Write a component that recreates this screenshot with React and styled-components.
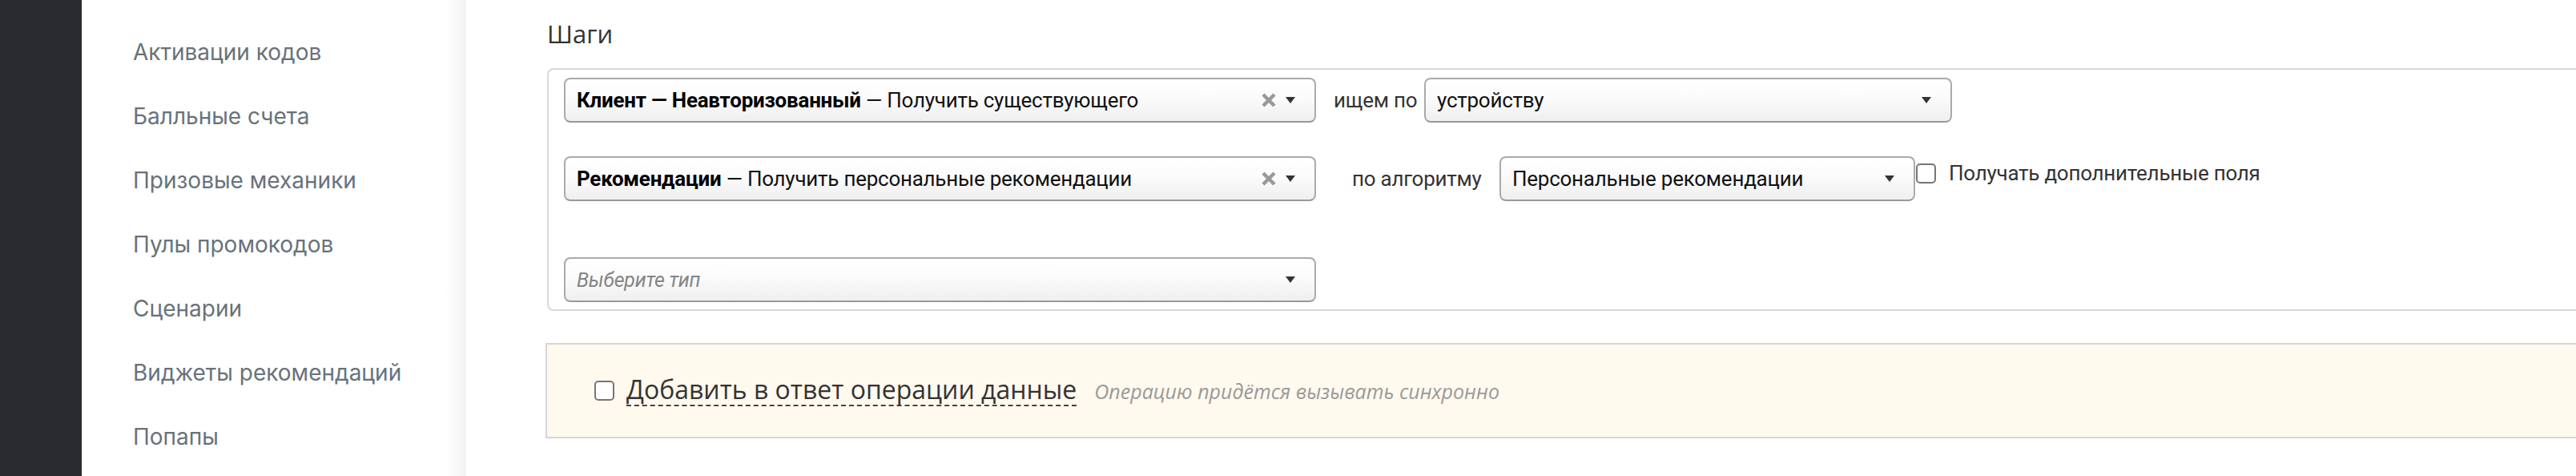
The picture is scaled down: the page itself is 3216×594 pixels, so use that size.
import React from 'react';
import styled, { createGlobalStyle } from 'styled-components';

const GlobalStyle = createGlobalStyle`
  html, body { margin: 0; padding: 0; background: #fff; }
  body { overflow: hidden; font-family: "Open Sans", "Noto Sans", sans-serif; }
  * { box-sizing: border-box; }
`;

const Page = styled.div`
  display: flex;
  width: 3216px;
  height: 594px;
  overflow: hidden;
`;

const Rail = styled.div`
  width: 102px;
  flex: none;
  background: #2a2b30;
`;

const Sidebar = styled.nav`
  width: 480px;
  flex: none;
  overflow: hidden;
  background: linear-gradient(to right, #fff 0, #fff calc(100% - 26px), #f3f3f3 100%);
`;

const NavList = styled.ul`
  list-style: none;
  margin: -55px 0 0;
  padding: 0;
`;

const NavItem = styled.li`
  height: 80px;
  display: flex;
  align-items: center;
  padding-left: 64px;
  font-family: Inter, "Noto Sans", sans-serif;
  font-size: 28px;
  color: #68727b;
  white-space: nowrap;
`;

const Main = styled.main`
  flex: 1;
  min-width: 0;
  overflow: hidden;
  padding: 20px 0 0 101px;
`;

const Heading = styled.h2`
  margin: 0 0 21px;
  font-size: 31px;
  line-height: 44px;
  font-weight: 400;
  color: #333;
`;

const StepsBox = styled.div`
  width: calc(100% + 40px);
  border: 2px solid #d8d8d8;
  border-radius: 8px;
  padding: 10px 0 9px 19px;
  display: flex;
  flex-direction: column;
`;

const Row = styled.div`
  display: flex;
  align-items: center;
  margin-top: ${(p) => p.$mt || 0}px;
`;

const formText = `
  font-family: Roboto, "Open Sans", sans-serif;
  font-size: 26px;
  letter-spacing: -0.25px;
`;

const SelectBox = styled.div`
  width: ${(p) => p.$w}px;
  height: 56px;
  flex: none;
  display: flex;
  align-items: center;
  padding: 0 24px 0 14px;
  border: 2px solid #aaa;
  border-bottom-color: #9a9a9a;
  border-radius: 8px;
  background: linear-gradient(to bottom, #fff 0%, #fbfbfb 45%, #efefef 100%);
  ${formText}
  color: #222;
`;

const Value = styled.span`
  flex: 1;
  min-width: 0;
  white-space: nowrap;
  overflow: hidden;
  color: ${(p) => (p.$placeholder ? '#858585' : '#111')};
  font-style: ${(p) => (p.$placeholder ? 'italic' : 'normal')};
  font-size: ${(p) => (p.$placeholder ? '25px' : 'inherit')};
`;

const Strong = styled.b`
  font-weight: 700;
  color: #000;
`;

const ClearIcon = styled.svg`
  width: 18px;
  height: 18px;
  margin-right: 12px;
  flex: none;
`;

const Arrow = styled.span`
  width: 0;
  height: 0;
  flex: none;
  border-left: 6px solid transparent;
  border-right: 6px solid transparent;
  border-top: 8px solid #333;
`;

const Label = styled.span`
  width: ${(p) => p.$w}px;
  padding-left: ${(p) => p.$pl}px;
  flex: none;
  ${formText}
  color: #333;
  white-space: nowrap;
`;

const InlineCheck = styled.label`
  display: flex;
  align-items: center;
  gap: 16px;
  align-self: flex-start;
  margin: 9px 0 0 1px;
  ${formText}
  line-height: 25px;
  color: #333;
  white-space: nowrap;
`;

const CheckBox = styled.input.attrs({ type: 'checkbox' })`
  appearance: none;
  margin: 0;
  width: 25px;
  height: 25px;
  flex: none;
  border: 2px solid #767676;
  border-radius: 5px;
  background: #fff;
`;

const Notice = styled.div`
  margin: 40px 0 0 -2px;
  width: calc(100% + 40px);
  height: 119px;
  background: #fff9ee;
  border: 2px solid #d6d6d6;
  display: flex;
  align-items: center;
  padding-left: 59px;
`;

const NoticeLabel = styled.label`
  display: flex;
  align-items: center;
  gap: 15px;
`;

const Dashed = styled.span`
  font-size: 32px;
  line-height: 33px;
  padding-bottom: 3px;
  color: #333;
  border-bottom: 2px dashed #444;
  white-space: nowrap;
`;

const Hint = styled.span`
  margin-left: 22px;
  font-size: 25px;
  font-style: italic;
  color: #9a9a9a;
  white-space: nowrap;
`;

const Clear = () => (
  <ClearIcon viewBox="0 0 18 18">
    <path d="M2 2 L16 16 M16 2 L2 16" stroke="#999" strokeWidth="4.5" strokeLinecap="butt" />
  </ClearIcon>
);

const Select = ({ w, clearable, placeholder, children }) => (
  <SelectBox $w={w}>
    <Value $placeholder={placeholder}>{children}</Value>
    {clearable && <Clear />}
    <Arrow />
  </SelectBox>
);

const navItems = [
  'Списки кодов',
  'Активации кодов',
  'Балльные счета',
  'Призовые механики',
  'Пулы промокодов',
  'Сценарии',
  'Виджеты рекомендаций',
  'Попапы',
];

export default function App() {
  return (
    <>
      <GlobalStyle />
      <Page>
        <Rail />
        <Sidebar>
          <NavList>
            {navItems.map((t) => (
              <NavItem key={t}>{t}</NavItem>
            ))}
          </NavList>
        </Sidebar>
        <Main>
          <Heading>Шаги</Heading>
          <StepsBox>
            <Row>
              <Select w={939} clearable>
                <Strong>Клиент — Неавторизованный</Strong> — Получить существующего
              </Select>
              <Label $w={135} $pl={22}>ищем по</Label>
              <Select w={659}>устройству</Select>
            </Row>
            <Row $mt={42}>
              <Select w={939} clearable>
                <Strong>Рекомендации</Strong> — Получить персональные рекомендации
              </Select>
              <Label $w={229} $pl={45}>по алгоритму</Label>
              <Select w={519}>Персональные рекомендации</Select>
              <InlineCheck>
                <CheckBox />
                Получать дополнительные поля
              </InlineCheck>
            </Row>
            <Row $mt={70}>
              <Select w={939} placeholder>
                Выберите тип
              </Select>
            </Row>
          </StepsBox>
          <Notice>
            <NoticeLabel>
              <CheckBox />
              <Dashed>Добавить в ответ операции данные</Dashed>
            </NoticeLabel>
            <Hint>Операцию придётся вызывать синхронно</Hint>
          </Notice>
        </Main>
      </Page>
    </>
  );
}
